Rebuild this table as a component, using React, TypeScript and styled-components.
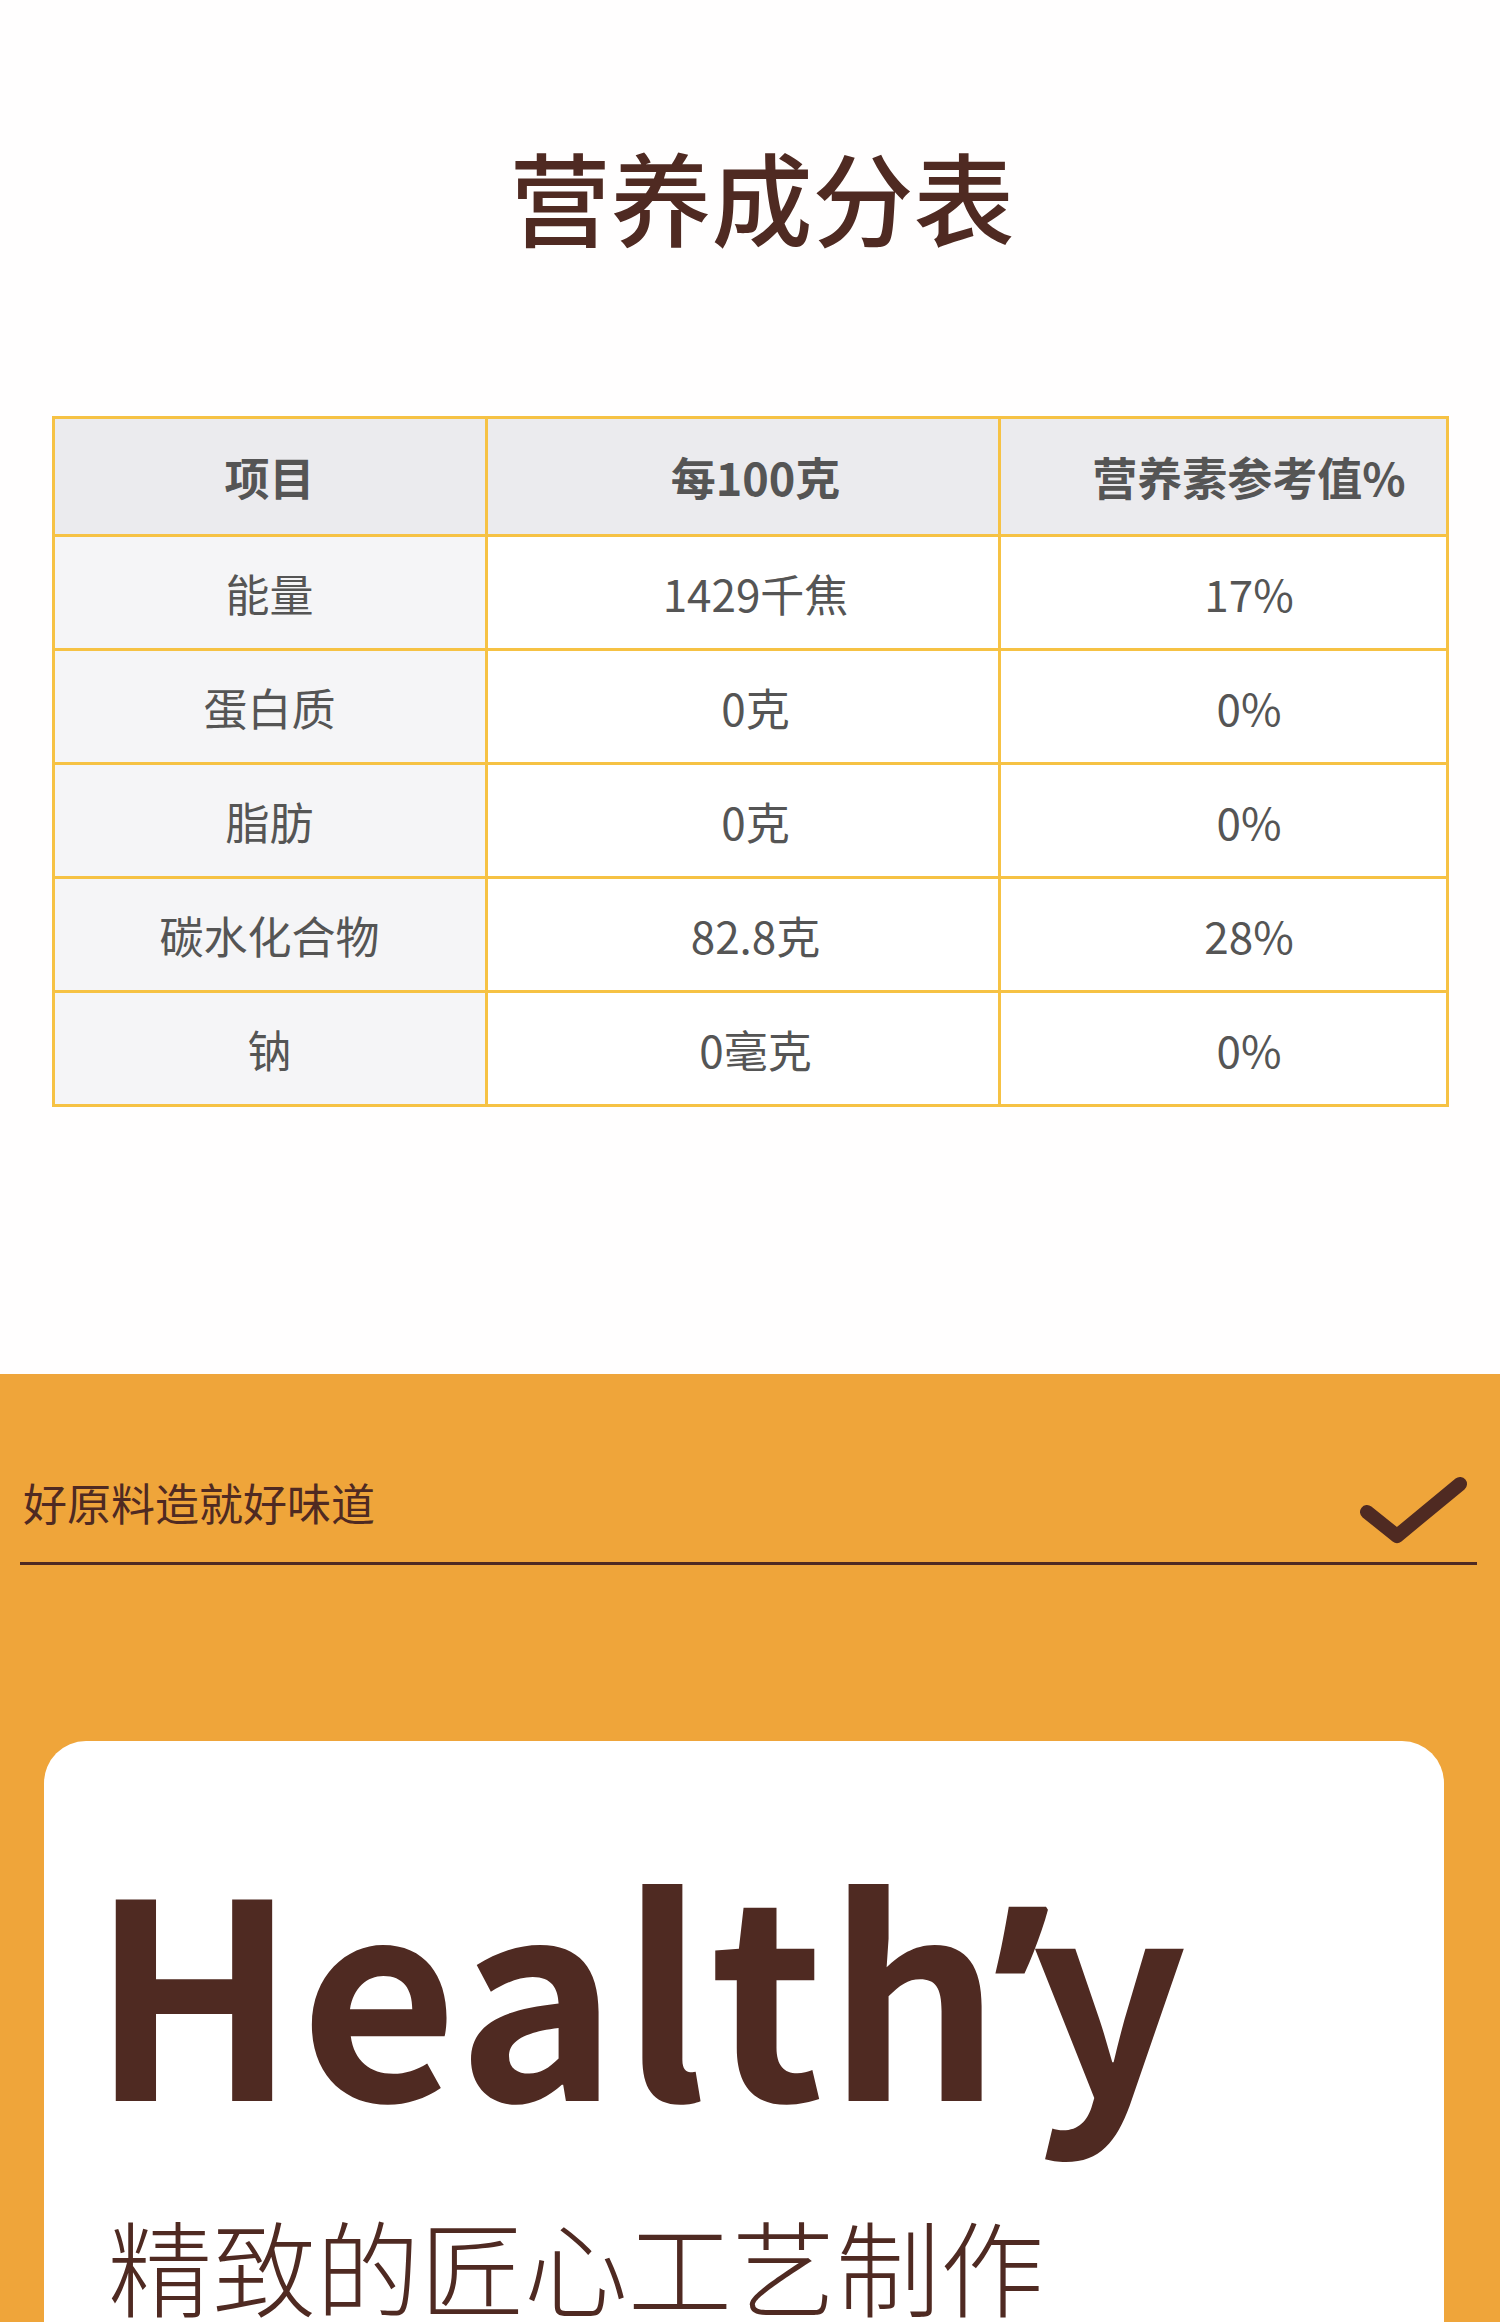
import React from "react";
import styled, { createGlobalStyle } from "styled-components";

const GlobalStyle = createGlobalStyle`
  html, body { margin: 0; padding: 0; background: #ffffff; }
  body { font-family: "Noto Sans CJK SC", "Noto Sans", sans-serif; }
  * { box-sizing: border-box; }
`;

const BROWN = "#4f2a22";
const BORDER = "#f6c244";

const Page = styled.div`
  width: 1500px;
  overflow: hidden;
`;

const NutritionSection = styled.section`
  height: 1374px;
  background: #fffefe;
  display: flex;
  flex-direction: column;
  align-items: center;
  padding-top: 145px;
`;

const Title = styled.h1`
  margin: 0 0 0 24px;
  font-family: "Noto Sans CJK SC", sans-serif;
  font-size: 101px;
  line-height: 1;
  font-weight: 500;
  color: ${BROWN};
  letter-spacing: 0;
`;

const Table = styled.div`
  margin-top: 170px;
  width: 1397px;
  display: grid;
  grid-template-columns: 430px 513px 1fr;
  border: 3px solid ${BORDER};
`;

const Cell = styled.div<{ $col: number; $head?: boolean }>`
  height: ${(p) => (p.$head ? 115 : 114)}px;
  display: flex;
  align-items: center;
  justify-content: center;
  padding-left: ${(p) => (p.$col === 1 ? 26 : p.$col === 2 ? 52 : 0)}px;
  border-left: ${(p) => (p.$col === 0 ? "none" : `3px solid ${BORDER}`)};
  border-top: ${(p) => (p.$head ? "none" : `3px solid ${BORDER}`)};
  background: ${(p) => (p.$head ? "#ebebee" : p.$col === 0 ? "#f5f5f7" : "#ffffff")};
  font-family: "Noto Sans CJK SC", sans-serif;
  font-size: ${(p) => (p.$head ? 45 : 44)}px;
  font-weight: ${(p) => (p.$head ? 700 : 400)};
  color: #555555;
  white-space: nowrap;
`;

const FeatureSection = styled.section`
  background: #efa53a;
  padding-top: 94px;
  padding-bottom: 200px;
`;

const SloganRow = styled.div`
  margin: 0 23px 0 20px;
  display: flex;
  align-items: flex-end;
  justify-content: space-between;
  border-bottom: 3px solid ${BROWN};
  padding-left: 3px;
  padding-bottom: 38px;
  height: 97px;
`;

const Slogan = styled.div`
  font-family: "Noto Sans CJK SC", sans-serif;
  font-size: 44px;
  line-height: 1;
  font-weight: 400;
  color: ${BROWN};
`;

const Check = styled.svg`
  width: 120px;
  height: 80px;
  margin-bottom: -26px;
`;

const Card = styled.div`
  margin: 176px 56px 0 44px;
  background: #ffffff;
  border-radius: 42px;
  padding: 105px 0 120px 64px;
  min-height: 700px;
`;

const Healthy = styled.div`
  font-family: "Noto Sans CJK SC", "Noto Sans", sans-serif;
  font-weight: 700;
  font-size: 272px;
  line-height: 1;
  color: ${BROWN};
  letter-spacing: 3px;
  margin-left: -17px;
  white-space: nowrap;
`;

const Apos = styled.span`
  font-family: "Noto Sans", sans-serif;
  font-weight: 700;
  letter-spacing: 0;
  margin: 0 -20px 0 -12px;
`;

const Craft = styled.div`
  margin-top: 81px;
  font-family: "Noto Sans CJK SC", sans-serif;
  font-weight: 300;
  font-size: 104px;
  line-height: 1;
  color: ${BROWN};
  white-space: nowrap;
`;

const rows: [string, string, string][] = [
  ["能量", "1429千焦", "17%"],
  ["蛋白质", "0克", "0%"],
  ["脂肪", "0克", "0%"],
  ["碳水化合物", "82.8克", "28%"],
  ["钠", "0毫克", "0%"],
];

export default function App() {
  return (
    <Page>
      <GlobalStyle />
      <NutritionSection>
        <Title>营养成分表</Title>
        <Table>
          <Cell $col={0} $head>项目</Cell>
          <Cell $col={1} $head>每100克</Cell>
          <Cell $col={2} $head>营养素参考值%</Cell>
          {rows.map((r) =>
            r.map((v, i) => (
              <Cell key={r[0] + i} $col={i}>
                {v}
              </Cell>
            ))
          )}
        </Table>
      </NutritionSection>
      <FeatureSection>
        <SloganRow>
          <Slogan>好原料造就好味道</Slogan>
          <Check viewBox="0 0 120 80">
            <path
              d="M10 42 L40 66 L103 14"
              fill="none"
              stroke={BROWN}
              strokeWidth="14"
              strokeLinecap="round"
              strokeLinejoin="round"
            />
          </Check>
        </SloganRow>
        <Card>
          <Healthy>
            Health<Apos>’</Apos>y
          </Healthy>
          <Craft>精致的匠心工艺制作</Craft>
        </Card>
      </FeatureSection>
    </Page>
  );
}
